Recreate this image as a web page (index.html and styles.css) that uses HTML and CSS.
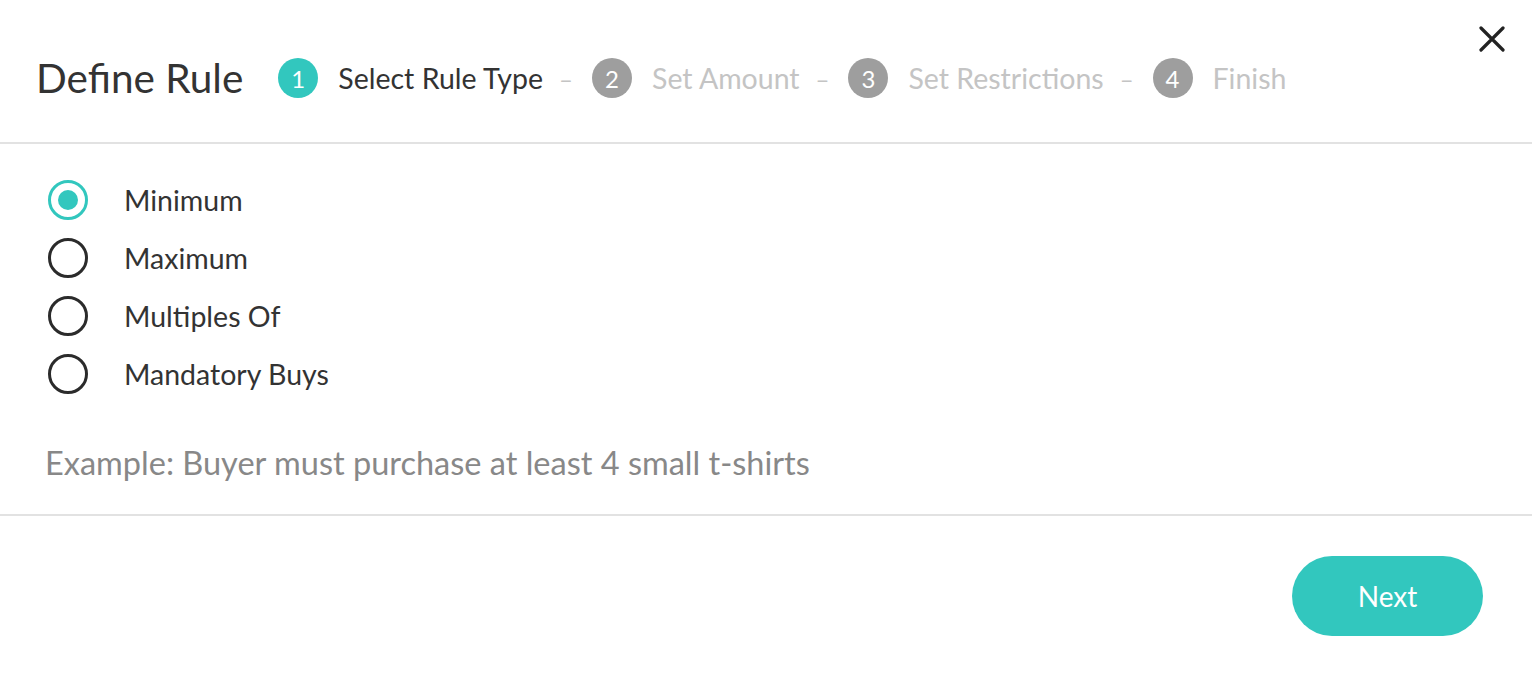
FILE: index.html
```html
<!DOCTYPE html>
<html>
<head>
<meta charset="utf-8">
<link rel="stylesheet" href="styles.css">
</head>
<body>
<div class="modal">
  <header class="head">
    <h1 class="title">Define Rule</h1>
    <ol class="steps">
      <li class="step active"><span class="num">1</span><span class="lbl">Select Rule Type</span></li>
      <li class="sep">–</li>
      <li class="step"><span class="num">2</span><span class="lbl">Set Amount</span></li>
      <li class="sep">–</li>
      <li class="step"><span class="num">3</span><span class="lbl">Set Restrictions</span></li>
      <li class="sep">–</li>
      <li class="step"><span class="num">4</span><span class="lbl">Finish</span></li>
    </ol>
    <button class="close" aria-label="Close">
      <svg width="26" height="26" viewBox="0 0 26 26"><path d="M2 2L24 24M24 2L2 24" stroke="#222" stroke-width="3.2" stroke-linecap="round"/></svg>
    </button>
  </header>
  <main class="body">
    <ul class="options">
      <li class="opt checked"><span class="radio"></span><span class="olbl">Minimum</span></li>
      <li class="opt"><span class="radio"></span><span class="olbl">Maximum</span></li>
      <li class="opt"><span class="radio"></span><span class="olbl">Multiples Of</span></li>
      <li class="opt"><span class="radio"></span><span class="olbl">Mandatory Buys</span></li>
    </ul>
    <p class="example">Example: Buyer must purchase at least 4 small t-shirts</p>
  </main>
  <footer class="foot">
    <button class="next">Next</button>
  </footer>
</div>
</body>
</html>
```
FILE: styles.css
```css
* { box-sizing: border-box; }
html, body { margin: 0; padding: 0; background: #fff; }
body { font-family: Lato, "Open Sans", sans-serif; color: #333; }
.modal { width: 1532px; height: 674px; }
.head {
  position: relative;
  height: 144px;
  border-bottom: 2px solid #e2e2e2;
  display: flex;
  align-items: center;
  padding-left: 36px;
  padding-top: 14px;
}
.title {
  margin: 0;
  font-size: 40.5px;
  font-weight: 400;
  color: #333;
  margin-right: 35px;
  line-height: 48px;
}
.steps {
  list-style: none;
  margin: 0;
  padding: 0;
  display: flex;
  align-items: center;
}
.step { display: flex; align-items: center; }
.num {
  width: 40px; height: 40px;
  border-radius: 50%;
  background: #9e9e9e;
  color: #fff;
  font-size: 24px;
  display: flex; align-items: center; justify-content: center;
  margin-right: 20px;
}
.active .num { background: #32c7be; }
.lbl { font-size: 28.5px; color: #c4c4c4; }
.active .lbl { color: #333; }
.sep { color: #c4c4c4; font-size: 24px; margin: 0 19px 0 16px; }
.close {
  position: absolute;
  right: 27px; top: 26px;
  border: 0; background: none; padding: 0;
  width: 26px; height: 26px;
}
.close svg { display: block; }
.body { padding: 27px 0 0 45px; height: 372px; border-bottom: 2px solid #e2e2e2; }
.options { list-style: none; margin: 0; padding: 0 0 0 3px; }
.opt { display: flex; align-items: center; height: 58px; }
.radio {
  width: 40px; height: 40px;
  border-radius: 50%;
  border: 3px solid #2b2b2b;
  margin-right: 36px;
  display: flex; align-items: center; justify-content: center;
}
.checked .radio { border-color: #32c7be; }
.checked .radio::after {
  content: "";
  width: 20px; height: 20px; border-radius: 50%;
  background: #32c7be;
}
.olbl { font-size: 28.5px; color: #333; }
.example { margin: 40px 0 0; font-size: 32.5px; line-height: 40px; color: #888; }
.foot { display: flex; justify-content: flex-end; padding: 40px 49px 0 0; }
.next {
  width: 191px; height: 80px;
  border-radius: 40px;
  border: 0;
  background: #32c7be;
  color: #fff;
  font-family: Lato, sans-serif;
  font-size: 28px;
}
```
